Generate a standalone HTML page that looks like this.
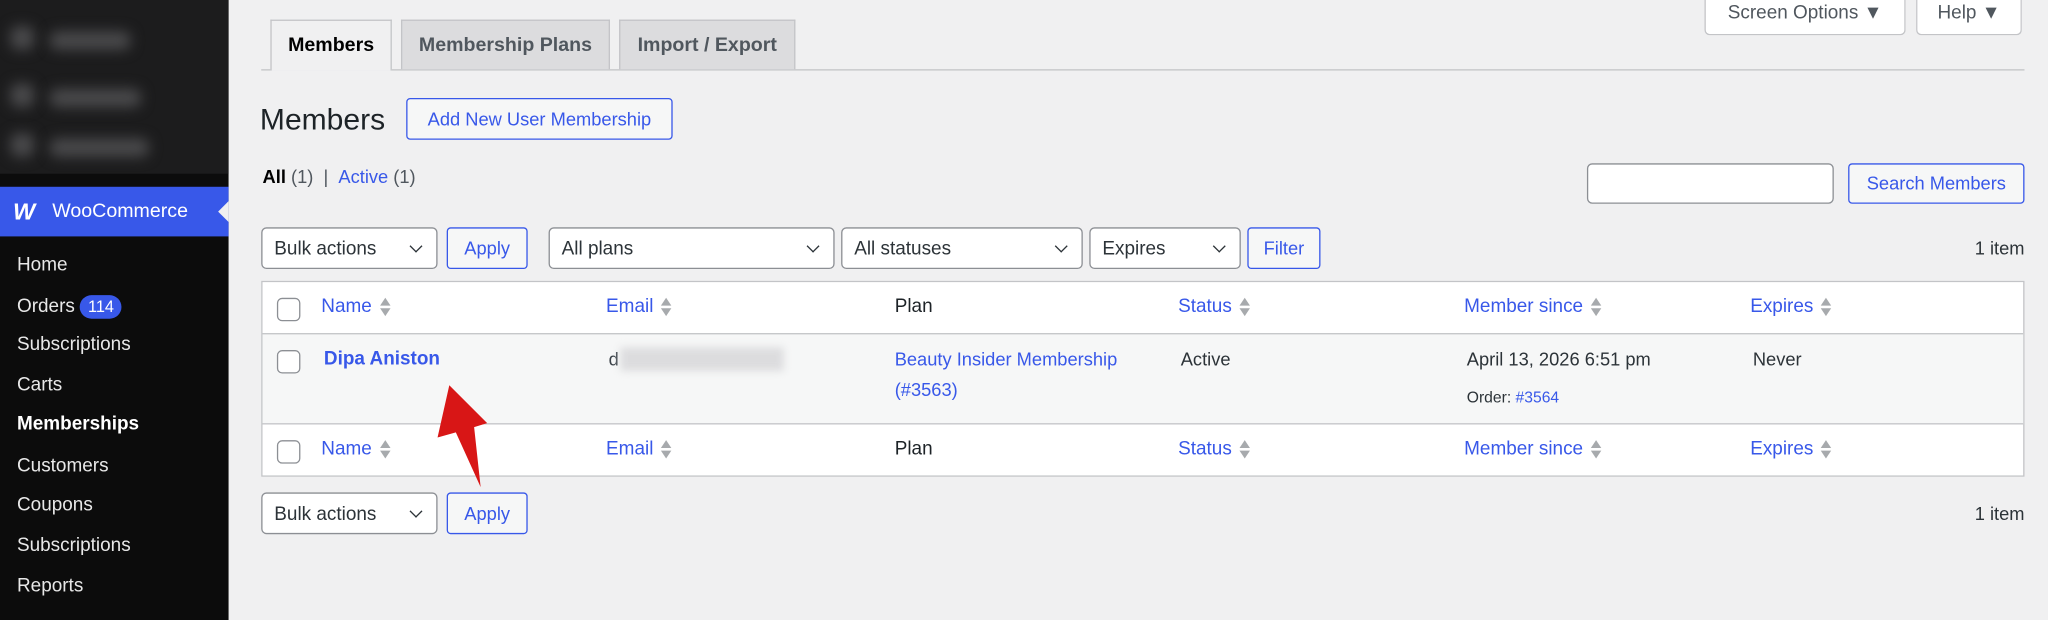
<!DOCTYPE html>
<html><head><meta charset="utf-8"><style>
html,body{margin:0;padding:0;width:2048px;height:620px;overflow:hidden;background:#f0f0f1}
#w{position:absolute;left:0;top:0;width:1568px;height:475px;transform:scale(1.30612);transform-origin:0 0;font-family:"Liberation Sans",sans-serif;font-size:14px;color:#1d2327}
.a{position:absolute}
.side{left:0;top:0;width:175px;height:475px;background:#0c0c0c}
.blur{left:0;top:0;width:175px;height:133px;background:#1c1c1d}
.bi{position:absolute;height:14px;border-radius:6px;background:#4a4a4c;filter:blur(5px)}
.woo{left:0;top:143px;width:175px;height:38px;background:#3858e9;color:#fff;font-size:15px}
.mi{position:absolute;left:13px;color:#e8e8e8;font-size:14.5px}
.tab{position:absolute;top:15px;height:38px;box-sizing:border-box;border:1px solid #c3c4c7;border-bottom:none;background:#dcdcde;font-weight:bold;font-size:15px;color:#50575e;line-height:38px;text-align:center}
.btn{position:absolute;box-sizing:border-box;border:1px solid #3858e9;border-radius:3px;background:#f6f7f7;color:#3858e9;text-align:center;font-size:14px}
.sel{position:absolute;box-sizing:border-box;border:1px solid #8c8f94;border-radius:4px;background:#fff;font-size:14.5px;padding-left:9px;color:#2c3338}
.sel:after{content:"";position:absolute;right:12px;top:10px;width:6px;height:6px;border-right:1.5px solid #2c3338;border-bottom:1.5px solid #2c3338;transform:rotate(45deg)}
.cb{position:absolute;left:212px;width:16px;height:16px;border:1px solid #8c8f94;border-radius:4px;background:#fff}
.lk{color:#3858e9}
.th{position:absolute;font-size:14.5px}
.sort{display:inline-block;vertical-align:middle;margin-left:6px;width:8px;height:16px;position:relative}
.sort:before{content:"";position:absolute;left:0;top:1px;border-left:4px solid transparent;border-right:4px solid transparent;border-bottom:6px solid #a7aaad}
.sort:after{content:"";position:absolute;left:0;top:9px;border-left:4px solid transparent;border-right:4px solid transparent;border-top:6px solid #a7aaad}
</style></head><body><div id="w">
<div class="a side"></div>
<div class="a blur">
<div class="bi" style="left:8px;top:20px;width:18px;height:18px"></div><div class="bi" style="left:38px;top:24px;width:62px"></div>
<div class="bi" style="left:8px;top:64px;width:18px;height:18px"></div><div class="bi" style="left:38px;top:68px;width:70px"></div>
<div class="bi" style="left:8px;top:102px;width:18px;height:18px"></div><div class="bi" style="left:38px;top:106px;width:76px"></div>
</div>
<div class="a woo"><span style="position:absolute;left:10px;top:9px;font-weight:bold;font-style:italic;font-size:18px;letter-spacing:-1px">W</span><span style="position:absolute;left:40px;top:10px">WooCommerce</span>
<div style="position:absolute;right:0;top:11px;border-top:8px solid transparent;border-bottom:8px solid transparent;border-right:8px solid #f0f0f1"></div></div>
<div class="mi" style="top:195px">Home</div>
<div class="mi" style="top:226px">Orders <span style="display:inline-block;background:#3858e9;color:#fff;border-radius:9px;padding:0 6px;font-size:12.5px;line-height:18px">114</span></div>
<div class="mi" style="top:256px">Subscriptions</div>
<div class="mi" style="top:287px">Carts</div>
<div class="mi" style="top:317px;color:#fff;font-weight:bold">Memberships</div>
<div class="mi" style="top:349px">Customers</div>
<div class="mi" style="top:379px">Coupons</div>
<div class="mi" style="top:410px">Subscriptions</div>
<div class="mi" style="top:441px">Reports</div>

<div class="a" style="left:200px;top:53px;width:1350px;height:1px;background:#c3c4c7"></div>
<div class="tab" style="left:207px;width:93px;background:#f0f0f1;color:#000;height:39px">Members</div>
<div class="tab" style="left:307px;width:160px">Membership Plans</div>
<div class="tab" style="left:474px;width:135px">Import / Export</div>

<div class="a" style="left:1305px;top:-3px;width:154px;height:30px;box-sizing:border-box;border:1px solid #c3c4c7;border-top:none;border-radius:0 0 4px 4px;background:#fff;color:#50575e;font-size:14.5px;line-height:26px;text-align:center">Screen Options ▼</div>
<div class="a" style="left:1467px;top:-3px;width:81px;height:30px;box-sizing:border-box;border:1px solid #c3c4c7;border-top:none;border-radius:0 0 4px 4px;background:#fff;color:#50575e;font-size:14.5px;line-height:26px;text-align:center">Help ▼</div>

<div class="a" style="left:199px;top:78px;font-size:23px;color:#1d2327">Members</div>
<div class="btn" style="left:311px;top:75px;width:204px;height:32px;line-height:30px;background:#f6f7f7">Add New User Membership</div>
<div class="a" style="left:201px;top:127px;font-size:14px;color:#50575e"><b style="color:#000;font-weight:bold">All</b> (1) &nbsp;| &nbsp;<span class="lk">Active</span> (1)</div>

<div class="a" style="left:1215px;top:125px;width:189px;height:31px;box-sizing:border-box;border:1px solid #8c8f94;border-radius:4px;background:#fff"></div>
<div class="btn" style="left:1415px;top:125px;width:135px;height:31px;line-height:29px">Search Members</div>

<div class="sel" style="left:200px;top:174px;width:135px;height:32px;line-height:32px">Bulk actions</div>
<div class="btn" style="left:342px;top:174px;width:62px;height:32px;line-height:30px">Apply</div>
<div class="sel" style="left:420px;top:174px;width:219px;height:32px;line-height:32px">All plans</div>
<div class="sel" style="left:644px;top:174px;width:185px;height:32px;line-height:32px">All statuses</div>
<div class="sel" style="left:834px;top:174px;width:116px;height:32px;line-height:32px">Expires</div>
<div class="btn" style="left:955px;top:174px;width:56px;height:32px;line-height:30px">Filter</div>
<div class="a" style="right:18px;top:182px;font-size:14px;color:#2c3338">1 item</div>

<div class="a" style="left:200px;top:215px;width:1350px;height:150px;box-sizing:border-box;border:1px solid #c3c4c7;background:#fff"></div>
<div class="a" style="left:201px;top:255px;width:1348px;height:68px;background:#f6f7f7;border-top:1px solid #c3c4c7;border-bottom:1px solid #c3c4c7"></div>
<div class="cb" style="top:228px"></div><div class="cb" style="top:268px"></div><div class="cb" style="top:337px"></div>

<div class="th lk" style="left:246px;top:227px">Name<span class="sort"></span></div>
<div class="th lk" style="left:464px;top:227px">Email<span class="sort"></span></div>
<div class="th" style="left:685px;top:227px">Plan</div>
<div class="th lk" style="left:902px;top:227px">Status<span class="sort"></span></div>
<div class="th lk" style="left:1121px;top:227px">Member since<span class="sort"></span></div>
<div class="th lk" style="left:1340px;top:227px">Expires<span class="sort"></span></div>

<div class="th lk" style="left:246px;top:336px">Name<span class="sort"></span></div>
<div class="th lk" style="left:464px;top:336px">Email<span class="sort"></span></div>
<div class="th" style="left:685px;top:336px">Plan</div>
<div class="th lk" style="left:902px;top:336px">Status<span class="sort"></span></div>
<div class="th lk" style="left:1121px;top:336px">Member since<span class="sort"></span></div>
<div class="th lk" style="left:1340px;top:336px">Expires<span class="sort"></span></div>

<div class="a lk" style="left:248px;top:267px;font-weight:bold;font-size:14.5px">Dipa Aniston</div>
<div class="a" style="left:466px;top:267px;color:#3c434a">d</div>
<div class="a" style="left:475px;top:266px;width:125px;height:18px;background:#dcdcde;filter:blur(3px)"></div>
<div class="a lk" style="left:685px;top:264px;line-height:23px">Beauty Insider Membership<br>(#3563)</div>
<div class="a" style="left:904px;top:267px;color:#2c3338">Active</div>
<div class="a" style="left:1123px;top:267px;color:#2c3338">April 13, 2026 6:51 pm</div>
<div class="a" style="left:1123px;top:297px;font-size:12px;color:#2c3338">Order: <span class="lk">#3564</span></div>
<div class="a" style="left:1342px;top:267px;color:#2c3338">Never</div>

<div class="sel" style="left:200px;top:377px;width:135px;height:32px;line-height:32px">Bulk actions</div>
<div class="btn" style="left:342px;top:377px;width:62px;height:32px;line-height:30px">Apply</div>
<div class="a" style="right:18px;top:385px;font-size:14px;color:#2c3338">1 item</div>

<svg class="a" style="left:0;top:0" width="1568" height="475"><polygon points="344,295 373,324 363,327 368,373 349,331 335,335" fill="#d81616"/></svg>
</div></body></html>
